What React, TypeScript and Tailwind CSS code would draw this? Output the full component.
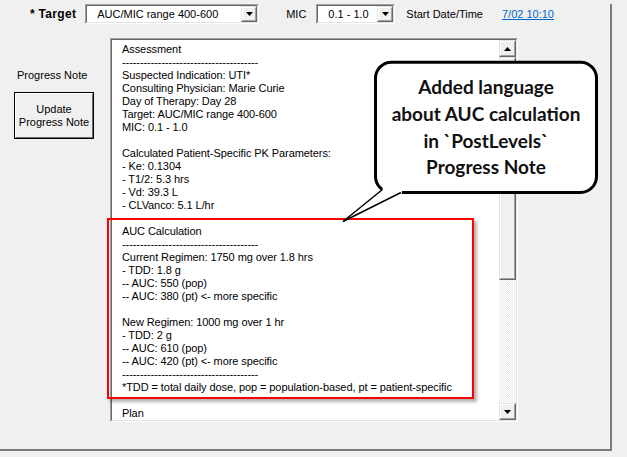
import React from "react";

const DASH = "--------------------------------------";

const lines: string[] = [
  "Assessment",
  DASH,
  "Suspected Indication: UTI*",
  "Consulting Physician: Marie Curie",
  "Day of Therapy: Day 28",
  "Target: AUC/MIC range 400-600",
  "MIC: 0.1 - 1.0",
  "",
  "Calculated Patient-Specific PK Parameters:",
  "- Ke: 0.1304",
  "- T1/2: 5.3 hrs",
  "- Vd: 39.3 L",
  "- CLVanco: 5.1 L/hr",
  "",
  "AUC Calculation",
  DASH,
  "Current Regimen: 1750 mg over 1.8 hrs",
  "- TDD: 1.8 g",
  "-- AUC: 550 (pop)",
  "-- AUC: 380 (pt) <- more specific",
  "",
  "New Regimen: 1000 mg over 1 hr",
  "- TDD: 2 g",
  "-- AUC: 610 (pop)",
  "-- AUC: 420 (pt) <- more specific",
  DASH,
  "*TDD = total daily dose, pop = population-based, pt = patient-specific",
  "",
  "Plan",
];

function Tri({ up }: { up?: boolean }) {
  return (
    <svg width="7" height="4" viewBox="0 0 7 4">
      {up ? <polygon points="3.5,0 7,4 0,4" fill="#000" /> : <polygon points="0,0 7,0 3.5,4" fill="#000" />}
    </svg>
  );
}

function Bevel({ className, children }: { className?: string; children?: React.ReactNode }) {
  return (
    <div className={"border border-t-[#e3e3e3] border-l-[#e3e3e3] border-r-[#696969] border-b-[#696969] " + (className ?? "")}>
      <div className="w-full h-full border border-t-white border-l-white border-r-[#a0a0a0] border-b-[#a0a0a0] bg-[#f0f0f0] flex items-center justify-center">
        {children}
      </div>
    </div>
  );
}

function Select({ text, className, pad }: { text: string; className: string; pad: string }) {
  return (
    <div className={"h-[20px] border border-t-[#a0a0a0] border-l-[#a0a0a0] border-r-white border-b-white " + className}>
      <div className="w-full h-full border border-t-[#696969] border-l-[#696969] border-r-[#e3e3e3] border-b-[#e3e3e3] bg-white flex items-center">
        <span className={"flex-1 leading-[16px] whitespace-pre " + pad}>{text}</span>
        <Bevel className="w-[16px] h-[16px]">
          <Tri />
        </Bevel>
      </div>
    </div>
  );
}

export default function App() {
  return (
    <div className="w-[627px] h-[457px] bg-[#f0f0f0] relative overflow-hidden text-[11px] text-black font-['Liberation_Sans',Arial,sans-serif]">
      <div className="w-[612px] h-[447px] border-r-2 border-b-2 border-r-[#7a7a7a] border-b-[#7a7a7a]">
        {/* top row */}
        <div className="flex items-center h-[20px] mt-[4px]">
          <span className="ml-[30px] font-bold text-[12px] tracking-[0.3px]">* Target</span>
          <Select text="AUC/MIC range 400-600" className="ml-[9px] w-[174px]" pad="pl-[10px]" />
          <span className="ml-[27px]">MIC</span>
          <Select text="0.1 - 1.0" className="ml-[10px] w-[79px]" pad="pl-[10px]" />
          <span className="ml-[11px]">Start Date/Time</span>
          <a className="ml-[19px] text-[#0066cc] underline">7/02 10:10</a>
        </div>

        {/* main row */}
        <div className="flex mt-[14px]">
          <div className="w-[110px] flex flex-col">
            <span className="ml-[17px] mt-[31px] leading-[13px]">Progress Note</span>
            <div className="ml-[14px] mt-[10px] w-[80px] h-[47px] border border-black">
              <div className="w-full h-full border border-t-white border-l-white border-r-[#696969] border-b-[#696969] bg-[#f0f0f0] flex flex-col items-center justify-center leading-[13px] text-center">
                <span>Update</span>
                <span>Progress Note</span>
              </div>
            </div>
          </div>

          <div className="w-[408px] h-[384px] border border-t-[#a0a0a0] border-l-[#a0a0a0] border-r-white border-b-white">
            <div className="w-full h-full border border-t-[#696969] border-l-[#696969] border-r-[#e3e3e3] border-b-[#e3e3e3] bg-white flex">
              <div className="flex-1 pl-[10px] pt-[2.5px] overflow-hidden tracking-[-0.08px]">
                {lines.map((l, i) => (
                  <div key={i} className="h-[13px] leading-[13px] whitespace-pre">
                    {l}
                  </div>
                ))}
              </div>
              <div className="w-[17px] h-full flex flex-col">
                <Bevel className="w-[17px] h-[17px] shrink-0">
                  <Tri up />
                </Bevel>
                <Bevel className="w-[17px] h-[223px] shrink-0" />
                <div className="flex-1 [background-image:repeating-conic-gradient(#ffffff_0%_25%,#ebebeb_0%_50%)] [background-size:2px_2px]" />
                <Bevel className="w-[17px] h-[17px] shrink-0">
                  <Tri />
                </Bevel>
              </div>
            </div>
          </div>
        </div>
      </div>

      {/* red highlight */}
      <div className="absolute left-[107px] top-[218px] w-[367px] h-[181px] border-2 border-[#ff0000] shadow-[3px_3px_3px_rgba(0,0,0,0.3)]" />

      {/* callout */}
      <svg className="absolute left-0 top-0 pointer-events-none" width="627" height="457" viewBox="0 0 627 457">
        <rect x="375.5" y="62.2" width="221" height="130.3" rx="16" ry="16" fill="#fff" stroke="#000" strokeWidth="3" />
        <polygon points="383,186 382.5,189.5 343,221.5 402,193.5 402,186" fill="#fff" />
        <polyline points="382.5,189.5 343,221.5 401,192.5" fill="none" stroke="#000" strokeWidth="1.5" />
      </svg>
      <div className="absolute left-[374px] top-[61px] w-[224px] h-[133px] flex flex-col items-center justify-center text-center font-['Lato',sans-serif] font-bold text-[19px] leading-[26.7px] text-[#111]">
        <span>Added language</span>
        <span>about AUC calculation</span>
        <span>in `PostLevels`</span>
        <span>Progress Note</span>
      </div>
    </div>
  );
}
